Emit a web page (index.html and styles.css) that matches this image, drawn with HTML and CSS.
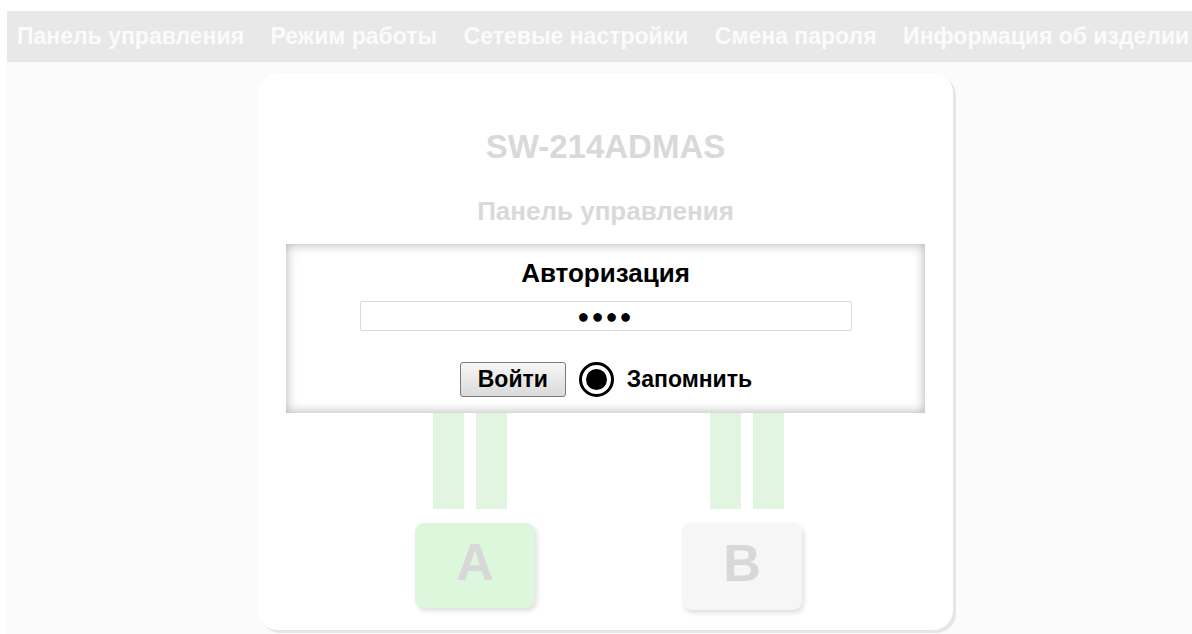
FILE: index.html
```html
<!DOCTYPE html>
<html lang="ru">
<head>
<meta charset="utf-8">
<title>SW-214ADMAS — Панель управления</title>
<link rel="stylesheet" href="styles.css">
</head>
<body>
<div class="page">
  <nav class="menu">
    <a class="menu-item" href="#">Панель управления</a>
    <a class="menu-item" href="#">Режим работы</a>
    <a class="menu-item" href="#">Сетевые настройки</a>
    <a class="menu-item" href="#">Смена пароля</a>
    <a class="menu-item" href="#">Информация об изделии</a>
  </nav>
  <main class="content">
    <section class="card">
      <h1 class="model">SW-214ADMAS</h1>
      <h2 class="subtitle">Панель управления</h2>
      <form class="auth">
        <div class="auth-title">Авторизация</div>
        <div class="password">●●●●</div>
        <div class="auth-actions">
          <button class="login" type="button">Войти</button>
          <span class="radio"><span class="radio-dot"></span></span>
          <span class="remember">Запомнить</span>
        </div>
      </form>
      <div class="ports">
        <div class="port port-a">
          <div class="wires"><span class="wire"></span><span class="wire"></span></div>
          <div class="port-box">A</div>
        </div>
        <div class="port port-b">
          <div class="wires"><span class="wire"></span><span class="wire"></span></div>
          <div class="port-box">B</div>
        </div>
      </div>
    </section>
  </main>
</div>
</body>
</html>
```
FILE: styles.css
```css
html {
  overflow: hidden;
  background: #ffffff;
}

body {
  margin: 0;
  font-family: "Liberation Sans", Arial, sans-serif;
}

.page {
  padding: 11px 0 0 7px;
}

/* top menu bar */
.menu {
  display: flex;
  gap: 26.5px;
  height: 51px;
  align-items: center;
  padding-left: 10px;
  background: #e8e8e8;
  white-space: nowrap;
  overflow: hidden;
}

.menu-item {
  color: #fbfbfb;
  text-decoration: none;
  font-weight: bold;
  font-size: 23px;
  line-height: 26px;
  margin-top: -2px;
}

.content {
  background: #fbfbfb;
  height: 572px;
  padding: 11px 0 0 251px;
  box-sizing: border-box;
}

/* main panel */
.card {
  width: 695px;
  height: 557px;
  background: #ffffff;
  border-radius: 20px;
  box-shadow: 3px 3px 0 #e6e6e6, 0 0 1px #f0f0f0;
  display: flex;
  flex-direction: column;
  align-items: center;
}

.model {
  margin: 56px 0 0;
  font-size: 33px;
  line-height: 36px;
  font-weight: bold;
  color: #d9d9d9;
}

.subtitle {
  margin: 32px 0 0;
  font-size: 26px;
  line-height: 28px;
  font-weight: bold;
  color: #d9d9d9;
}

/* login form */
.auth {
  margin-top: 19px;
  width: 639px;
  height: 169px;
  box-sizing: border-box;
  background: #ffffff;
  box-shadow: inset 0 0 12px rgba(0, 0, 0, 0.32);
  display: flex;
  flex-direction: column;
  align-items: center;
}

.auth-title {
  margin-top: 15px;
  font-size: 26px;
  line-height: 28px;
  font-weight: bold;
  color: #000000;
}

.password {
  margin-top: 14px;
  width: 492px;
  height: 30px;
  box-sizing: border-box;
  border: 1px solid #d9d9de;
  border-radius: 2px;
  text-align: center;
  font-size: 20px;
  line-height: 28px;
  letter-spacing: 2px;
  color: #000000;
}

.auth-actions {
  margin-top: 31px;
  display: flex;
  align-items: center;
  margin-left: 1px;
}

.login {
  width: 106px;
  height: 35px;
  font-family: inherit;
  font-size: 23px;
  font-weight: bold;
  color: #000000;
  border: 1px solid #7a7a7a;
  border-radius: 3px;
  background: linear-gradient(#f7f7f7, #e8e8e8 50%, #dadada);
  padding: 0;
}

.radio {
  margin-left: 13px;
  width: 35px;
  height: 35px;
  box-sizing: border-box;
  border: 3px solid #000000;
  border-radius: 50%;
  display: flex;
  align-items: center;
  justify-content: center;
}

.radio-dot {
  width: 21px;
  height: 21px;
  border-radius: 50%;
  background: #000000;
}

.remember {
  margin-left: 13px;
  font-size: 23px;
  font-weight: bold;
  color: #000000;
}

/* port diagram */
.ports {
  align-self: stretch;
  display: flex;
  gap: 147px;
  padding-left: 157px;
}

.port {
  width: 120px;
  display: flex;
  flex-direction: column;
}

.wires {
  display: flex;
  gap: 12px;
  height: 96px;
}

.port-a .wires {
  margin-left: 18px;
}

.port-b .wires {
  margin-left: 28px;
}

.wire {
  width: 31px;
  background: #e2f5e0;
  box-shadow: inset 0 0 1px #d5ead3;
}

.port-box {
  margin-top: 14px;
  height: 85px;
  box-sizing: border-box;
  padding-bottom: 8px;
  border-radius: 9px;
  display: flex;
  align-items: center;
  justify-content: center;
  font-size: 52px;
  font-weight: bold;
  color: #d8d8d8;
  box-shadow: 2px 3px 5px rgba(0, 0, 0, 0.13);
}

.port-a .port-box {
  background: #dcf7dc;
}

.port-b .port-box {
  background: #f6f6f6;
  height: 87px;
}
```
